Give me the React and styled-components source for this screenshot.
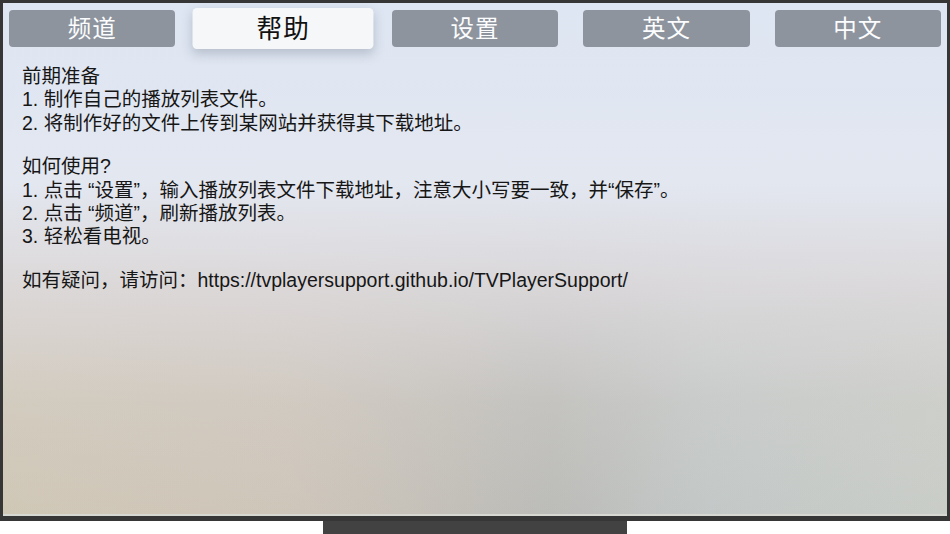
import React from "react";
import styled, { createGlobalStyle } from "styled-components";

const GlobalStyle = createGlobalStyle`
  html, body {
    margin: 0;
    padding: 0;
    background: #fff;
  }
  body {
    font-family: "Liberation Sans", "Noto Sans CJK SC", sans-serif;
  }
`;

const Tv = styled.div`
  width: 950px;
  height: 534px;
  display: flex;
  flex-direction: column;
`;

const Screen = styled.div`
  height: 521px;
  box-sizing: border-box;
  border: 3px solid #363636;
  border-bottom-width: 5px;
  background:
    linear-gradient(
      90deg,
      rgba(207, 198, 180, 0.95) 0%,
      rgba(205, 195, 182, 0.9) 30%,
      rgba(184, 184, 180, 0.9) 58%,
      rgba(192, 198, 197, 0.9) 75%,
      rgba(199, 203, 197, 0.9) 100%
    ),
    #ddd;
  position: relative;
  overflow: hidden;
  box-shadow: inset 0 -2px 0 #d8d8d2;
  display: flex;
  flex-direction: column;

  &::before {
    content: "";
    position: absolute;
    inset: 0;
    background: linear-gradient(
      180deg,
      #dee6f3 0%,
      #e3e7f0 35%,
      rgba(222, 219, 222, 0.85) 55%,
      rgba(215, 212, 210, 0.3) 78%,
      rgba(210, 208, 205, 0) 100%
    );
  }
`;

const Tabs = styled.div`
  position: relative;
  display: grid;
  grid-template-columns: repeat(5, 1fr);
  column-gap: 25px;
  padding: 7px 6px 0;
`;

const Tab = styled.div`
  height: 37px;
  box-sizing: border-box;
  padding-bottom: 1px;
  border-radius: 4px;
  display: flex;
  align-items: center;
  justify-content: center;
  font-family: "Noto Sans CJK SC", sans-serif;
  font-size: 23.5px;
  line-height: 1;
  letter-spacing: 1px;
  color: ${(p) => (p.$focused ? "#111" : "#fbfcfd")};
  background: ${(p) => (p.$focused ? "#f6f7f9" : "#8e949e")};
  transform: ${(p) => (p.$focused ? "scale(1.09, 1.11)" : "none")};
  box-shadow: ${(p) =>
    p.$focused ? "0 4px 10px rgba(60, 70, 90, 0.25)" : "none"};
`;

const Content = styled.div`
  position: relative;
  padding: 18px 19px 0;
  color: #161616;
  font-size: 19.5px;
  line-height: 23.4px;
`;

const Line = styled.div`
  white-space: nowrap;
`;

const Gap = styled.div`
  height: 20px;
`;

const Stand = styled.div`
  width: 304px;
  height: 13px;
  margin: 0 auto;
  background: #424242;
`;

const tabs = ["频道", "帮助", "设置", "英文", "中文"];

const App = () => {
  return (
    <>
      <GlobalStyle />
      <Tv>
        <Screen>
          <Tabs>
            {tabs.map((t) => (
              <Tab key={t} $focused={t === "帮助"}>
                {t}
              </Tab>
            ))}
          </Tabs>
          <Content>
            <Line>前期准备</Line>
            <Line>1. 制作自己的播放列表文件。</Line>
            <Line>2. 将制作好的文件上传到某网站并获得其下载地址。</Line>
            <Gap />
            <Line>如何使用?</Line>
            <Line>
              1. 点击 “设置”，输入播放列表文件下载地址，注意大小写要一致，并“保存”。
            </Line>
            <Line>2. 点击 “频道”，刷新播放列表。</Line>
            <Line>3. 轻松看电视。</Line>
            <Gap />
            <Line>
              如有疑问，请访问：https://tvplayersupport.github.io/TVPlayerSupport/
            </Line>
          </Content>
        </Screen>
        <Stand />
      </Tv>
    </>
  );
};

export default App;
